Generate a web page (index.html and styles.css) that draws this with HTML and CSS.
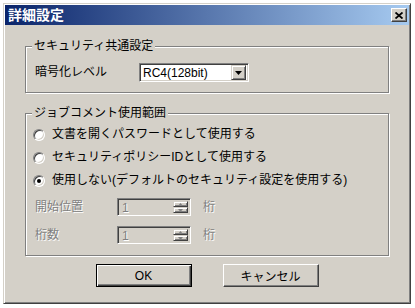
FILE: index.html
```html
<!DOCTYPE html>
<html>

<head>
    <meta charset="UTF-8">
    <title>詳細設定</title>
    <link rel="stylesheet" href="styles.css">
</head>

<body>
    <div class="dialog">
        <div class="titlebar">
            <span class="title">詳細設定</span>
            <span class="close">
                <svg width="8" height="7" viewBox="0 0 8 7">
                    <path d="M0.5 0.5 L7.5 6.5 M7.5 0.5 L0.5 6.5" stroke="#000" stroke-width="1.8" fill="none"/>
                </svg>
            </span>
        </div>
        <div class="body">
            <div class="group g1">
                <span class="legend">セキュリティ共通設定</span>
                <div class="row">
                    <span class="label">暗号化レベル</span>
                    <div class="combo">
                        <span class="combo-text">RC4(128bit)</span>
                        <span class="combo-btn">
                            <svg width="7" height="4" viewBox="0 0 7 4"><path d="M0 0 H7 L3.5 4 Z" fill="#000"/></svg>
                        </span>
                    </div>
                </div>
            </div>
            <div class="group g2">
                <span class="legend">ジョブコメント使用範囲</span>
                <div class="radio"><span class="circle"></span>文書を開くパスワードとして使用する</div>
                <div class="radio"><span class="circle"></span>セキュリティポリシーIDとして使用する</div>
                <div class="radio"><span class="circle checked"></span>使用しない(デフォルトのセキュリティ設定を使用する)</div>
                <div class="spin-row first">
                    <span class="label short dis">開始位置</span>
                    <div class="spin">
                        <span class="spin-text">1</span>
                        <span class="spin-btns">
                            <span class="sb"><svg width="5" height="3" viewBox="0 0 5 3"><path d="M2.5 0 L5 3 H0 Z" fill="#808080"/></svg></span>
                            <span class="sb"><svg width="5" height="3" viewBox="0 0 5 3"><path d="M0 0 H5 L2.5 3 Z" fill="#808080"/></svg></span>
                        </span>
                    </div>
                    <span class="unit dis">桁</span>
                </div>
                <div class="spin-row second">
                    <span class="label short dis">桁数</span>
                    <div class="spin">
                        <span class="spin-text">1</span>
                        <span class="spin-btns">
                            <span class="sb"><svg width="5" height="3" viewBox="0 0 5 3"><path d="M2.5 0 L5 3 H0 Z" fill="#808080"/></svg></span>
                            <span class="sb"><svg width="5" height="3" viewBox="0 0 5 3"><path d="M0 0 H5 L2.5 3 Z" fill="#808080"/></svg></span>
                        </span>
                    </div>
                    <span class="unit dis">桁</span>
                </div>
            </div>
            <div class="buttons">
                <button class="btn default">OK</button>
                <button class="btn">キャンセル</button>
            </div>
        </div>
    </div>
</body>
</html>
```

FILE: styles.css
```css
* {
    margin: 0;
    padding: 0;
    box-sizing: border-box;
}

body {
    background: #fff;
    font-family: "Liberation Sans", "Noto Sans CJK JP", sans-serif;
    font-size: 12px;
    color: #000;
}

.dialog {
    margin: 3px 0 0 3px;
    width: 408px;
    height: 301px;
    background: #d4d0c8;
    border: 1px solid;
    border-color: #d4d0c8 #404040 #404040 #d4d0c8;
    box-shadow: inset 1px 1px 0 #fff, inset -1px -1px 0 #808080;
    padding: 1px;
}

.titlebar {
    height: 20px;
    display: flex;
    align-items: center;
    justify-content: space-between;
    background: linear-gradient(to right, #0a246a, #a6caf0);
    padding: 0 2px 0 3px;
}

.title {
    color: #fff;
    font-weight: bold;
    font-size: 14px;
    line-height: 16px;
    letter-spacing: 0;
}

.close {
    width: 16px;
    height: 14px;
    background: #d4d0c8;
    border: 1px solid;
    border-color: #fff #404040 #404040 #fff;
    box-shadow: inset -1px -1px 0 #808080;
    display: flex;
    align-items: center;
    justify-content: center;
}

.body {
    padding: 21px 20px 0 20px;
}

.group {
    border: 1px solid #808080;
    box-shadow: inset 1px 1px 0 #fff, 1px 1px 0 #fff;
    padding: 0 9px;
}

.legend {
    display: table;
    background: #d4d0c8;
    height: 15px;
    line-height: 15px;
    padding: 0 2px;
    margin: -8px 0 0 -3px;
}

.g1 {
    padding-bottom: 10px;
}

.g2 {
    margin-top: 20px;
    padding-bottom: 11px;
}

.row {
    margin-top: 9px;
    display: flex;
    align-items: center;
    height: 19px;
}

.label {
    width: 104px;
    line-height: 15px;
}

.label.short {
    width: 82px;
}

.combo {
    width: 110px;
    height: 19px;
    background: #fff;
    border: 1px solid;
    border-color: #808080 #fff #fff #808080;
    box-shadow: inset 1px 1px 0 #404040, inset -1px -1px 0 #d4d0c8;
    display: flex;
    align-items: center;
    padding: 2px 2px 2px 3px;
}

.combo-text {
    flex: 1;
    line-height: 14px;
}

.combo-btn {
    width: 15px;
    height: 15px;
    background: #d4d0c8;
    border: 1px solid;
    border-color: #d4d0c8 #404040 #404040 #d4d0c8;
    box-shadow: inset 1px 1px 0 #fff, inset -1px -1px 0 #808080;
    display: flex;
    align-items: center;
    justify-content: center;
}

.radio {
    height: 23px;
    display: flex;
    align-items: center;
    line-height: 15px;
    margin-left: -2px;
}

.radio:first-of-type,
.legend + .radio {
    margin-top: 2px;
}

.circle {
    width: 12px;
    height: 12px;
    border-radius: 50%;
    background: #fff;
    border: 1px solid;
    border-color: #808080 #fff #fff #808080;
    box-shadow: inset 1px 1px 0 #404040, inset -1px -1px 0 #d4d0c8;
    margin-right: 7px;
    display: flex;
    align-items: center;
    justify-content: center;
}

.circle.checked::after {
    content: "";
    width: 4px;
    height: 4px;
    border-radius: 50%;
    background: #000;
}

.spin-row {
    display: flex;
    align-items: center;
    height: 18px;
}

.spin-row.first {
    margin-top: 6px;
}

.spin-row.second {
    margin-top: 10px;
}

.dis {
    color: #808080;
    text-shadow: 1px 1px 0 #fff;
}

.spin {
    width: 74px;
    height: 18px;
    background: #d4d0c8;
    border: 1px solid;
    border-color: #808080 #fff #fff #808080;
    box-shadow: inset 1px 1px 0 #404040, inset -1px -1px 0 #d4d0c8;
    display: flex;
    align-items: stretch;
    padding: 2px 2px 2px 4px;
}

.spin-text {
    flex: 1;
    color: #808080;
    text-shadow: 1px 1px 0 #fff;
    line-height: 14px;
}

.spin-btns {
    width: 15px;
    display: flex;
    flex-direction: column;
}

.sb {
    flex: 1;
    background: #d4d0c8;
    border: 1px solid;
    border-color: #d4d0c8 #404040 #404040 #d4d0c8;
    box-shadow: inset 1px 1px 0 #fff, inset -1px -1px 0 #808080;
    display: flex;
    align-items: center;
    justify-content: center;
}

.sb svg {
    display: block;
}

.unit {
    margin-left: 12px;
    line-height: 15px;
}

.buttons {
    margin-top: 8px;
    display: flex;
    justify-content: center;
    gap: 31px;
}

.btn {
    width: 96px;
    height: 23px;
    font-family: "Liberation Sans", "Noto Sans CJK JP", sans-serif;
    font-size: 12px;
    color: #000;
    background: #d4d0c8;
    border: 1px solid;
    border-color: #fff #404040 #404040 #fff;
    box-shadow: inset -1px -1px 0 #808080;
}

.btn.default {
    border: 1px solid #000;
    box-shadow: inset 1px 1px 0 #fff, inset -1px -1px 0 #404040, inset -2px -2px 0 #808080;
}
```
